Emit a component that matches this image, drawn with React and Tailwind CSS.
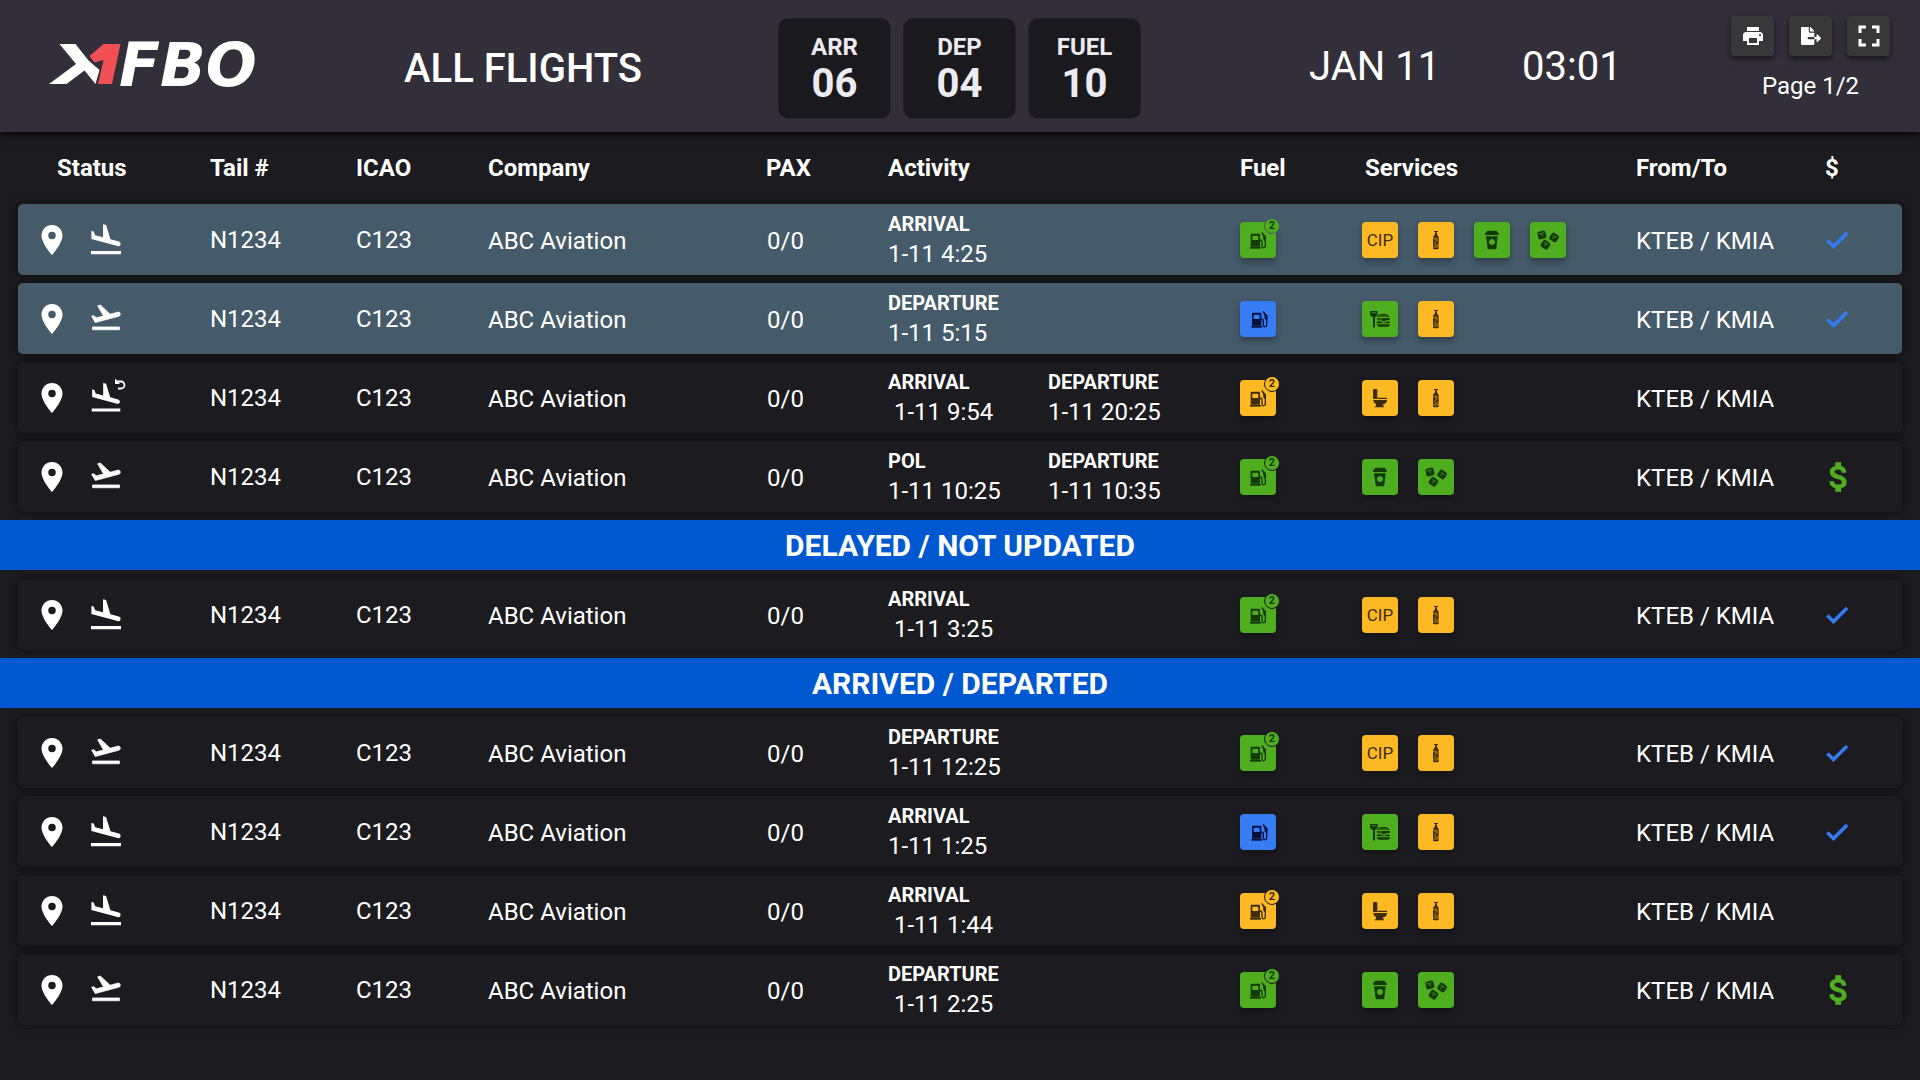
import {
  MdFlightLand,
  MdFlightTakeoff,
  MdPrint,
  MdFullscreen,
  MdLocationOn,
  MdCheck,
  MdAttachMoney,
} from "react-icons/md";
import { FaFileExport } from "react-icons/fa";

const COLUMNS =
  "grid grid-cols-[192fr_146fr_132fr_278fr_122fr_352fr_122fr_274fr_183fr_83fr] items-center mx-[18px]";

const CHIP = {
  green: "bg-[#4fae20] text-[#143a08]",
  yellow: "bg-[#fdb924] text-[#3d2c06]",
  blue: "bg-[#367cf3] text-[#04103a]",
};

const BADGE = {
  green: "bg-[#4fae20]",
  yellow: "bg-[#fdb924]",
  blue: "bg-[#367cf3]",
};

const DETAIL = {
  green: "stroke-[#4fae20]",
  yellow: "stroke-[#fdb924]",
  blue: "stroke-[#367cf3]",
};

function Logo() {
  return (
    <svg viewBox="0 0 214 40" className="mb-1 w-[214px] h-10 overflow-visible" role="img" aria-label="X1FBO">
      <path fill="#fff" d="M10.500 0H26.500L39.500 16.500L50.500 26L46.500 40L35.500 26.500L17.500 40H0L27 20Z" />
      <path fill="#f05054" d="M54.500 0H71.500L63 40H49L54.500 16L45.500 18.500L40.500 12Z" />
      <text
        x="70"
        y="42"
        fill="#fff"
        fontFamily="DejaVu Sans, sans-serif"
        fontSize="60"
        fontWeight="700"
        fontStyle="italic"
      >
        FBO
      </text>
    </svg>
  );
}

function Stat({ label, value }) {
  return (
    <div className="flex h-[101px] w-[113px] flex-col items-center justify-center rounded-[10px] border border-[#24232a] bg-[#1a191d] font-bold text-[#ecebf1]">
      <span className="text-2xl leading-8">{label}</span>
      <span className="text-[40px] leading-[42px]">{value}</span>
    </div>
  );
}

function ToolButton({ label, children }) {
  return (
    <button
      type="button"
      aria-label={label}
      className="flex h-10 w-[43px] items-center justify-center rounded bg-[#383838] text-white shadow-[0_3px_6px_rgba(0,0,0,0.55)]"
    >
      {children}
    </button>
  );
}

function PumpArt() {
  return (
    <>
      <path fillRule="evenodd" fill="currentColor" d="M35 35H57a3 3 0 0 1 3 3V74H32V38a3 3 0 0 1 3-3ZM37 41V54H55V41Z" />
      <path fill="currentColor" d="M30 75H63V80H30Z" />
      <path fill="none" stroke="currentColor" strokeWidth="4" d="M60 54C65 54 66 57 66 61V72C66 79 76 79 76 71V45L65 31" />
      <path fill="currentColor" d="M66 34L78 43V56H73C70 54 69 51 70 46Z" />
    </>
  );
}

function BottleArt({ detail }) {
  return (
    <>
      <path fill="currentColor" d="M48 27H60V30H48ZM51 31H57V36C58 40 62 42 62 47V78Q62 82 58 82H49Q45 82 45 78V47C45 42 50 40 51 36Z" />
      <path fill="none" strokeWidth="2" className={detail} d="M45 50C52 46 58 48 57 54C56 60 50 60 50 65C50 70 56 72 62 67M50 53Q53 51 53 55M45 74Q53 78 62 73" />
    </>
  );
}

function CupArt() {
  return (
    <path
      fillRule="evenodd"
      fill="currentColor"
      d="M39 26H69L71 32H74V39H33V32H36ZM36 43H71L67 79Q67 82 64 82H44Q41 82 41 79ZM54 51a9 9 0 1 0 0.100 0Z"
    />
  );
}

function IceArt({ detail }) {
  return (
    <>
      <g transform="rotate(-15 35 38)">
        <rect x="23" y="27" width="25" height="24" rx="6" fill="currentColor" />
        <path fill="none" strokeWidth="2" className={detail} d="M27 33Q35 37 43 33M36 36V43" />
      </g>
      <g transform="rotate(35 72 46)">
        <rect x="60" y="34" width="25" height="24" rx="6" fill="currentColor" />
        <path fill="none" strokeWidth="2" className={detail} d="M65 42Q72 46 79 41M71 44V52" />
      </g>
      <g transform="rotate(35 46 68)">
        <rect x="34" y="56" width="25" height="24" rx="6" fill="currentColor" />
        <path fill="none" strokeWidth="2" className={detail} d="M39 63Q46 67 53 62M46 65V73" />
      </g>
    </>
  );
}

function CateringArt({ detail }) {
  return (
    <>
      <path fill="currentColor" d="M24 30H47V38Q46 47 39 48V77Q36 82 33 77V48Q25 47 24 38Z" />
      <path fill="none" strokeWidth="2" className={detail} d="M28 35H43" />
      <path fill="currentColor" d="M45 48Q48 39 60 39H68Q79 39 82 48ZM44 51H83Q86 56 81 58L74 57L66 62L58 58H46ZM44 62L54 61L66 66L76 61L84 63V67H44ZM44 70H84Q84 77 77 77H52Q45 77 44 70Z" />
      <path fill="none" strokeWidth="2" className={detail} d="M50 45H76M47 54H60" />
    </>
  );
}

function ToiletArt() {
  return (
    <>
      <rect x="33" y="27" width="13" height="30" rx="4" fill="currentColor" />
      <path fill="currentColor" d="M46 53H75V57H46ZM34 60H75C75 68 70 72 63 73V76L67 82H37L42 77V72C37 70 34 66 34 60Z" />
    </>
  );
}

const ART = {
  pump: [PumpArt, "Fuel"],
  bottle: [BottleArt, "Water"],
  cup: [CupArt, "Coffee"],
  ice: [IceArt, "Ice"],
  catering: [CateringArt, "Catering"],
  toilet: [ToiletArt, "Lavatory"],
};

function Chip({ color, kind, count, host }) {
  const [Art, label] = ART[kind] || [null, kind];
  const view = kind === "pump" && !count ? "-4 0 108 108" : "0 0 108 108";
  return (
    <div
      className={`relative flex size-9 shrink-0 items-center justify-center rounded shadow-[0_4px_6px_rgba(0,0,0,0.3)] ${CHIP[color]}`}
    >
      {Art ? (
        <svg viewBox={view} className="size-9" role="img" aria-label={label}>
          <Art detail={DETAIL[color]} />
        </svg>
      ) : (
        <span className="text-[17px] leading-5">{kind}</span>
      )}
      {count && (
        <span
          className={`absolute -top-1 -right-1 flex size-4 items-center justify-center rounded-full border text-[11px] leading-3 font-bold ${BADGE[color]} ${host}`}
        >
          {count}
        </span>
      )}
    </div>
  );
}

function FlightIcon({ type }) {
  if (type === "departure") {
    return (
      <MdFlightTakeoff
        className="mb-1 size-[34px] stroke-current [&_path[fill=none]]:stroke-none"
        strokeWidth="0.5"
        aria-label="Departure"
      />
    );
  }
  if (type === "return") {
    return (
      <span className="relative">
        <MdFlightLand className="size-9" aria-label="Quick turn" />
        <svg viewBox="0 0 12 12" className="absolute -top-0.5 -right-0.5 size-3" aria-hidden="true">
          <path fill="none" stroke="currentColor" strokeWidth="1.800" d="M2 3.500H7A3.500 3.500 0 0 1 7 10.500H4" />
          <path fill="currentColor" d="M1 0.500V6H6Z" />
        </svg>
      </span>
    );
  }
  return <MdFlightLand className="size-[38px]" aria-label="Arrival" />;
}

const FLIGHTS = {
  current: [
    {
      active: true,
      type: "arrival",
      activity: [["ARRIVAL", "1-11 4:25"]],
      fuel: ["green", 2],
      services: [["yellow", "CIP"], ["yellow", "bottle"], ["green", "cup"], ["green", "ice"]],
      pay: "check",
    },
    {
      active: true,
      type: "departure",
      activity: [["DEPARTURE", "1-11 5:15"]],
      fuel: ["blue"],
      services: [["green", "catering"], ["yellow", "bottle"]],
      pay: "check",
    },
    {
      type: "return",
      activity: [["ARRIVAL", " 1-11 9:54"], ["DEPARTURE", "1-11 20:25"]],
      fuel: ["yellow", 2],
      services: [["yellow", "toilet"], ["yellow", "bottle"]],
    },
    {
      type: "departure",
      activity: [["POL", "1-11 10:25"], ["DEPARTURE", "1-11 10:35"]],
      fuel: ["green", 2],
      services: [["green", "cup"], ["green", "ice"]],
      pay: "dollar",
    },
  ],
  delayed: [
    {
      type: "arrival",
      activity: [["ARRIVAL", " 1-11 3:25"]],
      fuel: ["green", 2],
      services: [["yellow", "CIP"], ["yellow", "bottle"]],
      pay: "check",
    },
  ],
  done: [
    {
      type: "departure",
      activity: [["DEPARTURE", "1-11 12:25"]],
      fuel: ["green", 2],
      services: [["yellow", "CIP"], ["yellow", "bottle"]],
      pay: "check",
    },
    {
      type: "arrival",
      activity: [["ARRIVAL", "1-11 1:25"]],
      fuel: ["blue"],
      services: [["green", "catering"], ["yellow", "bottle"]],
      pay: "check",
    },
    {
      type: "arrival",
      activity: [["ARRIVAL", " 1-11 1:44"]],
      fuel: ["yellow", 2],
      services: [["yellow", "toilet"], ["yellow", "bottle"]],
    },
    {
      type: "departure",
      activity: [["DEPARTURE", " 1-11 2:25"]],
      fuel: ["green", 2],
      services: [["green", "cup"], ["green", "ice"]],
      pay: "dollar",
    },
  ],
};

function FlightRow({ flight }) {
  const [fuelColor, fuelCount] = flight.fuel;
  const host = flight.active ? "border-[#455b6a]" : "border-[#1c1b1f]";
  return (
    <tr
      className={`${COLUMNS} h-[71px] rounded-[5px] shadow-[0_0_8px_rgba(0,0,0,0.6)] ${
        flight.active ? "bg-[#455b6a]" : "bg-[#1c1b1f]"
      }`}
    >
      <td className="flex items-center gap-[17px] pl-4">
        <MdLocationOn className="size-9" aria-label="On location" />
        <span className="flex w-[38px] justify-center">
          <FlightIcon type={flight.type} />
        </span>
      </td>
      <td>N1234</td>
      <td>C123</td>
      <td className="pt-0.5">ABC Aviation</td>
      <td className="pt-0.5 pl-px">0/0</td>
      <td className="flex pb-0.5">
        {flight.activity.map(([label, time]) => (
          <div key={label} className="w-40 leading-[30px]">
            <div className="text-xl leading-[30px] font-bold">{label}</div>
            <div className="whitespace-pre">{time}</div>
          </div>
        ))}
      </td>
      <td>
        <Chip color={fuelColor} kind="pump" count={fuelCount} host={host} />
      </td>
      <td className="flex gap-5">
        {flight.services.map(([color, kind]) => (
          <Chip key={kind} color={color} kind={kind} />
        ))}
      </td>
      <td className="pt-0.5">KTEB / KMIA</td>
      <td>
        <div className="flex w-10 justify-center">
          {flight.pay === "check" && (
            <MdCheck
              className="mr-1 size-7 shrink-0 stroke-current text-[#367bf3] [&_path[fill=none]]:stroke-none"
              strokeWidth="1"
              aria-label="Paid"
            />
          )}
          {flight.pay === "dollar" && (
            <MdAttachMoney
              className="size-[38px] shrink-0 stroke-current text-[#4fae20] [&_path[fill=none]]:stroke-none"
              strokeWidth="0.7"
              aria-label="Payment due"
            />
          )}
        </div>
      </td>
    </tr>
  );
}

function Section({ title, flights }) {
  return (
    <tbody className="flex flex-col gap-2">
      {title && (
        <tr className="mb-px flex bg-[#0058d0]">
          <th colSpan={10} className="flex-1 pt-0.5 text-center text-[30px] leading-[48px] font-bold">
            {title}
          </th>
        </tr>
      )}
      {flights.map((flight, i) => (
        <FlightRow key={i} flight={flight} />
      ))}
    </tbody>
  );
}

export default function App() {
  return (
    <div className="min-h-screen bg-[#1c1b1f] font-[Roboto,sans-serif] text-2xl text-white">
      <header className="relative grid h-[132px] grid-cols-[355fr_374fr_531fr_213fr_209fr_auto] items-center bg-[#322f3a] pr-[30px] pl-[49px] shadow-[0_2px_10px_#000]">
        <Logo />
        <h1 className="pt-1.5 text-[40px] leading-[48px] font-medium">ALL FLIGHTS</h1>
        <div className="flex gap-3 pt-1">
          <Stat label="ARR" value="06" />
          <Stat label="DEP" value="04" />
          <Stat label="FUEL" value="10" />
        </div>
        <div className="pt-0.5 text-[40px] leading-[48px]">JAN 11</div>
        <div className="pt-0.5 text-[40px] leading-[48px]">03:01</div>
        <div className="flex flex-col items-center gap-3 self-start pt-4">
          <div className="flex gap-[15px]">
            <ToolButton label="Print">
              <MdPrint className="size-6" />
            </ToolButton>
            <ToolButton label="Export">
              <FaFileExport className="size-5" />
            </ToolButton>
            <ToolButton label="Full screen">
              <MdFullscreen className="size-9" />
            </ToolButton>
          </div>
          <div className="leading-9">Page 1/2</div>
        </div>
      </header>
      <table className="flex flex-col gap-2">
        <thead className="-mb-2 block">
          <tr className={`${COLUMNS} h-[72px] text-left`}>
            <th className="pl-[39px]">Status</th>
            <th>Tail #</th>
            <th>ICAO</th>
            <th>Company</th>
            <th>PAX</th>
            <th>Activity</th>
            <th>Fuel</th>
            <th className="pl-[3px]">Services</th>
            <th>From/To</th>
            <th className="pl-1.5">$</th>
          </tr>
        </thead>
        <Section flights={FLIGHTS.current} />
        <Section title="DELAYED / NOT UPDATED" flights={FLIGHTS.delayed} />
        <Section title="ARRIVED / DEPARTED" flights={FLIGHTS.done} />
      </table>
    </div>
  );
}
